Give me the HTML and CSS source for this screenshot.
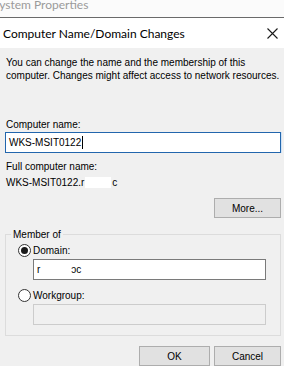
FILE: index.html
```html
<!DOCTYPE html>
<html lang="en">

<head>
    <meta charset="UTF-8">
    <meta name="viewport" content="width=device-width, initial-scale=1.0">
    <title>Computer Name/Domain Changes</title>
    <link rel="stylesheet" href="styles.css">
</head>

<body>
    <div class="parent-title"><span>System Properties</span></div>

    <div class="dialog">
        <div class="titlebar">
            <span class="dialog-title">Computer Name/Domain Changes</span>
            <svg class="close-icon" width="11" height="11" viewBox="0 0 11 11">
                <path d="M0.5 0.5 L10.5 10.5 M10.5 0.5 L0.5 10.5" stroke="#1a1a1a" stroke-width="1.1" fill="none" />
            </svg>
        </div>

        <div class="dialog-body">
            <p class="intro">You can change the name and the membership of this<br>computer. Changes might affect access to network resources.</p>

            <div class="field-label computer-label">Computer name:</div>
            <div class="textbox focused">WKS-MSIT0122<span class="caret"></span></div>

            <div class="field-label full-label">Full computer name:</div>
            <div class="full-name">WKS-MSIT0122.r<span class="redact"></span>c</div>

            <div class="more-row">
                <button class="win-btn more-btn">More...</button>
            </div>

            <fieldset class="member-box">
                <legend>Member of</legend>
                <div class="radio-row">
                    <span class="radio checked"></span>
                    <span>Domain:</span>
                </div>
                <div class="textbox inset">r<span class="gap"></span>ɔc</div>
                <div class="radio-row">
                    <span class="radio"></span>
                    <span>Workgroup:</span>
                </div>
                <div class="textbox inset disabled"></div>
            </fieldset>

            <div class="button-row">
                <button class="win-btn ok-btn">OK</button>
                <button class="win-btn cancel-btn">Cancel</button>
            </div>
        </div>
    </div>
</body>

</html>
```

FILE: styles.css
```css
:root {
    --face-color: #f0f0f0;
    /* Dialog background */
    --text-color: #000000;
    --btn-bg: #e1e1e1;
    --btn-border: #adadad;
    --focus-border: #2266ad;
    --box-border: #7a7a7a;
    --group-border: #dcdcdc;
}

* {
    box-sizing: border-box;
    margin: 0;
    padding: 0;
}

body {
    width: 284px;
    height: 366px;
    overflow: hidden;
    background-color: var(--face-color);
    color: var(--text-color);
    font-family: "Liberation Sans", Arial, sans-serif;
    font-size: 10px;
    line-height: 13px;
}

/* Window behind the dialog, only its title peeks out */
.parent-title {
    height: 18px;
    background-color: #fbfbfb;
    border-bottom: 1px solid #6a6a6a;
    overflow: hidden;
    font-family: Lato, "Noto Sans", sans-serif;
    font-size: 12px;
    line-height: 14px;
    color: #9a9a9a;
}

.parent-title span {
    display: block;
    margin-left: -7px;
    margin-top: -2px;
}

.titlebar {
    height: 30px;
    background-color: #ffffff;
    display: flex;
    align-items: center;
    justify-content: space-between;
    padding: 0 6px 0 3px;
}

.dialog-title {
    font-family: Lato, "Noto Sans", sans-serif;
    font-size: 12px;
    color: #000;
}

.close-icon {
    display: block;
}

.dialog-body {
    padding: 8px 3px 0 5px;
}

.intro {
    padding-left: 1px;
}

.field-label {
    padding-left: 1px;
}

.computer-label {
    margin-top: 36px;
}

.textbox {
    height: 21px;
    background-color: #ffffff;
    border: 1px solid var(--box-border);
    padding: 3px 0 0 3px;
    display: flex;
    align-items: flex-start;
    white-space: nowrap;
}

.textbox.focused {
    margin-top: 1px;
    border-color: var(--focus-border);
    box-shadow: 1px 0 0 #cfe2f5;
}

.caret {
    display: inline-block;
    width: 1px;
    height: 13px;
    background-color: #000;
    margin-left: 1px;
}

.full-label {
    margin-top: 7px;
}

.full-name {
    margin-top: 3px;
    padding-left: 1px;
    display: flex;
    align-items: center;
}

.redact {
    display: inline-block;
    width: 26px;
    height: 11px;
    background-color: #ffffff;
    margin: 0 1px;
}

.more-row {
    display: flex;
    justify-content: flex-end;
    margin-top: 9px;
}

.win-btn {
    height: 20px;
    background-color: var(--btn-bg);
    border: 1px solid var(--btn-border);
    font-family: "Liberation Sans", Arial, sans-serif;
    font-size: 10px;
    color: #000;
}

.more-btn {
    width: 67px;
}

.member-box {
    margin-top: 10px;
    border: 1px solid var(--group-border);
    padding: 2px 14px 10px 12px;
}

.member-box legend {
    margin-left: -7px;
    padding: 0 2px;
}

.radio-row {
    display: flex;
    align-items: center;
    gap: 2px;
    height: 14px;
}

.radio {
    width: 13px;
    height: 13px;
    border-radius: 50%;
    border: 1px solid #333333;
    background-color: #ffffff;
    display: flex;
    align-items: center;
    justify-content: center;
}

.radio.checked::after {
    content: "";
    width: 7px;
    height: 7px;
    border-radius: 50%;
    background-color: #1a1a1a;
}

.textbox.inset {
    margin: 2px 0 0 15px;
}

.gap {
    display: inline-block;
    width: 31px;
}

.textbox.disabled {
    background-color: var(--face-color);
    border-color: #cccccc;
}

.member-box .textbox + .radio-row {
    margin-top: 8px;
}

.button-row {
    display: flex;
    justify-content: flex-end;
    gap: 4px;
    margin-top: 10px;
}

.ok-btn {
    width: 71px;
}

.cancel-btn {
    width: 67px;
}
```
